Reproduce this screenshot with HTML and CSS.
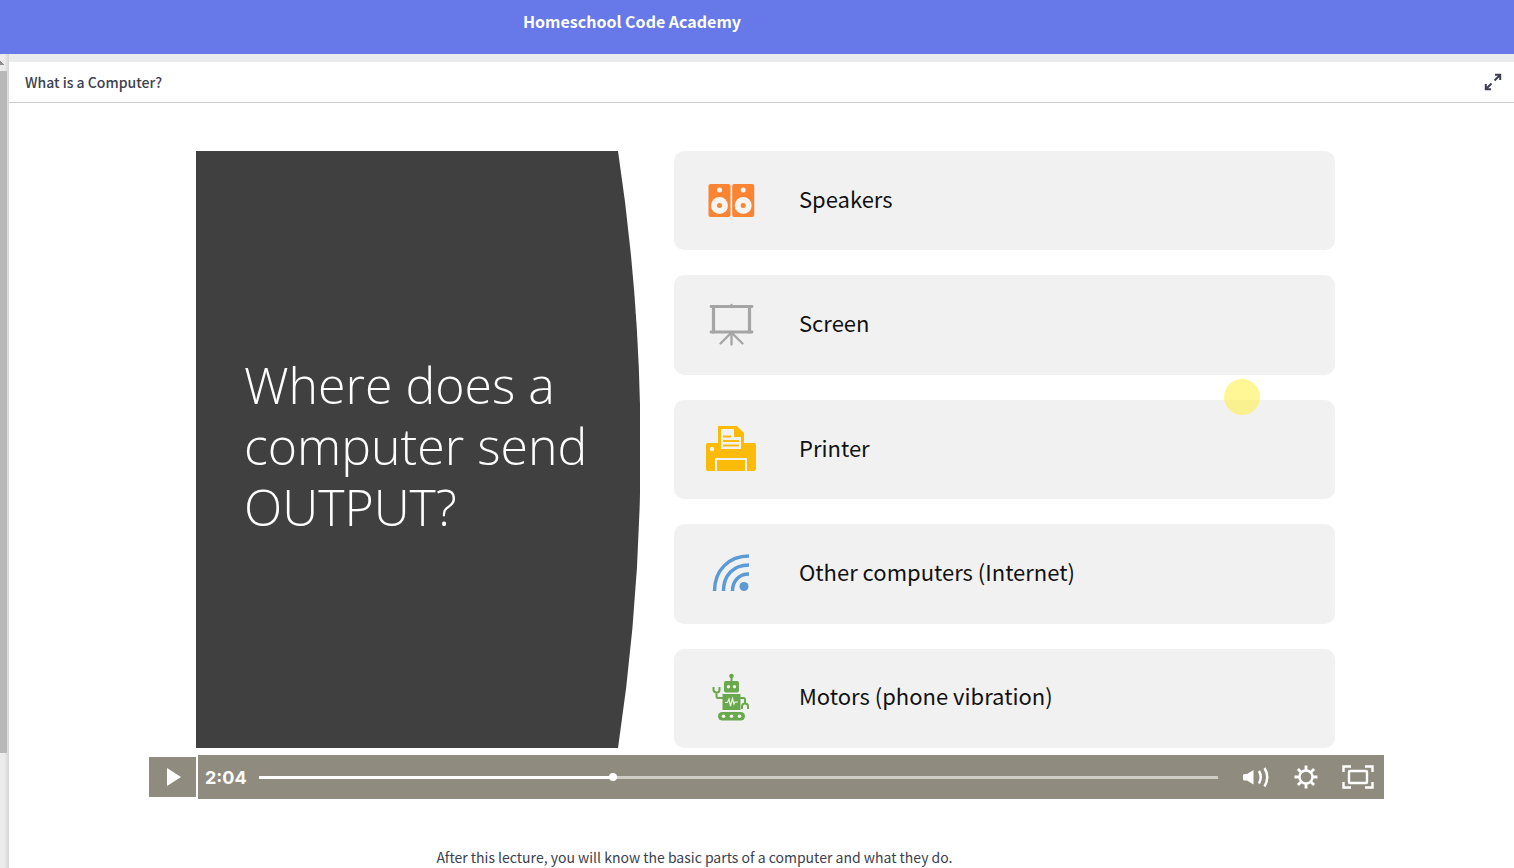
FILE: index.html
```html
<!DOCTYPE html>
<html lang="en">
<head>
    <meta charset="UTF-8">
    <meta name="viewport" content="width=device-width, initial-scale=1.0">
    <title>Homeschool Code Academy</title>
    <link rel="stylesheet" href="styles.css">
</head>
<body>

    <!-- Top Bar -->
    <header class="topbar">
        <h1 class="site-title">Homeschool Code Academy</h1>
    </header>

    <div class="layout">

        <!-- Sidebar scroll strip -->
        <div class="scroll-strip">
            <div class="scroll-arrow"></div>
            <div class="scroll-thumb"></div>
            <div class="scroll-rest"></div>
        </div>

        <main class="lesson">
            <div class="lesson-header">
                <h2 class="lesson-title">What is a Computer?</h2>
                <button class="icon-button" type="button" aria-label="Expand lesson">
                    <svg class="expand-icon" width="18" height="18" viewBox="0 0 18 18">
                        <path d="M10.5 7.5L15.5 2.5M11 1.8H16.2V7M7.5 10.5L2.5 15.5M1.8 11V16.2H7"/>
                    </svg>
                </button>
            </div>

            <!-- Video Player -->
            <section class="player">
                <div class="slide">
                    <div class="slide-heading">
                        <svg class="slide-shape" viewBox="0 0 444 597" preserveAspectRatio="none">
                            <path d="M0 0H422Q467 298 422 597H0Z"/>
                        </svg>
                        <h3 class="slide-title">Where does a<br>computer send<br>OUTPUT?</h3>
                    </div>

                    <ul class="cards">
                        <li class="card">
                            <svg class="card-icon" viewBox="0 0 50 50">
                                <rect x="2.500" y="9" width="22" height="33" rx="2" fill="#fb8432"/>
                                <rect x="26.200" y="9" width="22" height="33" rx="2" fill="#fb8432"/>
                                <g fill="#f8f4f1">
                                    <circle cx="13.500" cy="15" r="2.500"/>
                                    <circle cx="37.200" cy="15" r="2.500"/>
                                    <circle cx="13.500" cy="30.500" r="8.500"/>
                                    <circle cx="37.200" cy="30.500" r="8.500"/>
                                </g>
                                <circle cx="13.500" cy="30.500" r="2.500" fill="#fb8432"/>
                                <circle cx="37.200" cy="30.500" r="2.500" fill="#fb8432"/>
                            </svg>
                            <span class="card-label">Speakers</span>
                        </li>
                        <li class="card">
                            <svg class="card-icon" viewBox="0 0 50 50" fill="none" stroke="#a5a5a5" stroke-width="2.300" stroke-linecap="round">
                                <path d="M5 7.500H46M5 33H46" stroke-width="2.800"/>
                                <path d="M7.500 7.500V33M43.500 7.500V33" stroke-width="3.200"/>
                                <path d="M25.500 6V8M25.500 33V45.500M25 34L14.500 44.500M26 34L36.500 44.500"/>
                            </svg>
                            <span class="card-label">Screen</span>
                        </li>
                        <li class="card">
                            <svg class="card-icon" viewBox="0 0 50 50">
                                <path fill="#fdbb09" d="M12 19V2H31L38 9V19H48Q50 19 50 21V45Q50 47 48 47H41V34H9V47H2Q0 47 0 45V21Q0 19 2 19H12ZM15 5V25H35V13H28V5Z" fill-rule="evenodd"/>
                                <path fill="#fdbb09" d="M11 36H39V47H11ZM31 6V10H35Z"/>
                                <path stroke="#fdbb09" stroke-width="2" d="M17 12.500H25M17 17H33M17 21.500H33"/>
                                <circle cx="6" cy="25" r="2.200" fill="#f8f4f1"/>
                            </svg>
                            <span class="card-label">Printer</span>
                        </li>
                        <li class="card">
                            <svg class="card-icon" viewBox="0 0 50 50" fill="none" stroke="#5b9bd5" stroke-width="3.500">
                                <path d="M8.500 43C8.500 22 23 8 43 8M17.500 43C17.500 27 27.500 17 43 17M26.500 43C26.500 33 33 26 43 26"/>
                                <circle cx="38" cy="38.500" r="4.500" fill="#5b9bd5" stroke="none"/>
                            </svg>
                            <span class="card-label">Other computers (Internet)</span>
                        </li>
                        <li class="card">
                            <svg class="card-icon" viewBox="0 0 50 50" fill="#69a84c">
                                <circle cx="25.500" cy="4" r="2.300"/>
                                <rect x="24.500" y="4" width="2" height="6"/>
                                <rect x="18" y="9" width="15" height="11.500" rx="2"/>
                                <rect x="16.500" y="22" width="18" height="16"/>
                                <rect x="12" y="40" width="27" height="8.500" rx="4.200"/>
                                <path fill="none" stroke="#69a84c" stroke-width="2" d="M17 26H12Q10.500 26 10.500 24V20.500M7.500 15V18Q8 20.500 10.500 20.500Q13.500 20.500 13.500 18V15M34 26H37.500Q39 26 39 28V31M36 37V34Q36.500 31.500 39 31.500Q42 31.500 42 34V37"/>
                                <g fill="#f0f1ef">
                                    <circle cx="22.500" cy="14.800" r="1.700"/>
                                    <circle cx="28.500" cy="14.800" r="1.700"/>
                                    <circle cx="17.500" cy="44.200" r="1.800"/>
                                    <circle cx="25.500" cy="44.200" r="1.800"/>
                                    <circle cx="33.500" cy="44.200" r="1.800"/>
                                </g>
                                <path fill="none" stroke="#f0f1ef" stroke-width="1.200" d="M19 30.500H21.500L23 27L24.500 34L26.500 26.500L28 32L29 30H32"/>
                            </svg>
                            <span class="card-label">Motors (phone vibration)</span>
                        </li>
                        <li class="pointer-spot" aria-hidden="true"></li>
                    </ul>
                </div>

                <!-- Player Controls -->
                <div class="controls">
                    <button class="play-button" type="button" aria-label="Play">
                        <svg width="14" height="18" viewBox="0 0 14 18"><path d="M0 0L14 9L0 18Z" fill="#fff"/></svg>
                    </button>
                    <div class="control-bar">
                        <span class="time">2:04</span>
                        <input class="seek" type="range" min="0" max="1000" value="368" aria-label="Seek">
                        <div class="control-icons">
                            <button class="icon-button" type="button" aria-label="Volume">
                                <svg width="28" height="24" viewBox="0 0 28 24">
                                    <path fill="#fff" d="M1 10.500Q1 9 2.500 9H5L11.500 5V19.500L5 15.500H2.500Q1 15.500 1 14Z"/>
                                    <path fill="none" stroke="#fff" stroke-width="2.500" d="M17 6Q20.500 12 17 18.500M22.500 3Q28 12 22.500 21.500"/>
                                </svg>
                            </button>
                            <button class="icon-button" type="button" aria-label="Settings">
                                <svg width="24" height="24" viewBox="0 0 24 24" fill="none" stroke="#fff">
                                    <circle cx="12" cy="12" r="6.500" stroke-width="2.400"/>
                                    <path stroke-width="2.800" d="M12 .5V5M12 19V23.500M.5 12H5M19 12H23.500M3.900 3.900L7 7M17 17L20.100 20.100M3.900 20.100L7 17M17 7L20.100 3.900"/>
                                </svg>
                            </button>
                            <button class="icon-button" type="button" aria-label="Fullscreen">
                                <svg width="32" height="24" viewBox="0 0 32 24" fill="none" stroke="#fff" stroke-width="2.400">
                                    <rect x="7" y="6" width="18" height="12" rx="1"/>
                                    <path d="M1.500 7V1.500H9M23 1.500H30.500V7M30.500 17V22.500H23M9 22.500H1.500V17"/>
                                </svg>
                            </button>
                        </div>
                    </div>
                </div>
            </section>

            <p class="lesson-text">After this lecture, you will know the basic parts of a computer and what they do.</p>
        </main>
    </div>

</body>
</html>
```
FILE: styles.css
```css
body, html {
    margin: 0;
    padding: 0;
}

body {
    min-height: 100vh;
    display: flex;
    flex-direction: column;
    background-color: #e9ebed;
    color: #3c414f;
    font-family: 'Noto Sans CJK SC', 'Open Sans', sans-serif;
}

h1, h2, h3, p, ul {
    margin: 0;
    padding: 0;
}

button {
    border: none;
    padding: 0;
    background: none;
    cursor: pointer;
}

svg {
    display: block;
}

/* Top Bar */
.topbar {
    height: 42px;
    padding: 0 250px 12px 0;
    display: flex;
    justify-content: center;
    align-items: center;
    background-color: #6779e8;
}

.site-title {
    color: #fff;
    font-size: 16px;
    line-height: 24px;
    font-weight: 700;
}

.layout {
    flex: 1;
    display: flex;
}

/* Sidebar scroll strip */
.scroll-strip {
    width: 9px;
    display: flex;
    flex-direction: column;
    background: linear-gradient(to right, #ececec 4px, #d6d6d6);
}

.scroll-arrow {
    height: 17px;
    background: linear-gradient(to top right, #8f8f8f 50%, transparent 50%) 0 7px / 4px 4px no-repeat;
}

.scroll-thumb {
    flex: 682;
    width: 7px;
    background-color: #b8b8b8;
}

.scroll-rest {
    flex: 115;
}

/* Lesson */
.lesson {
    flex: 1;
    margin-top: 8px;
    background-color: #fff;
}

.lesson-header {
    display: flex;
    justify-content: space-between;
    align-items: center;
    height: 40px;
    padding: 0 12px 0 16px;
    border-bottom: 1px solid #ccc;
}

.lesson-title {
    font-size: 14px;
    line-height: 20px;
    font-weight: 500;
}

.expand-icon {
    fill: none;
    stroke: #3c414f;
    stroke-width: 2;
}

/* Player */
.player {
    padding: 48px 130px 0 140px;
}

.slide {
    display: flex;
    gap: 34px;
    padding: 0 49px 0 47px;
}

.slide-heading {
    position: relative;
    flex: 444;
    display: flex;
    align-items: center;
}

.slide-shape {
    position: absolute;
    top: 0;
    left: 0;
    width: 100%;
    height: 100%;
    fill: #404040;
}

.slide-title {
    position: relative;
    padding: 0 0 6px 48px;
    color: #fff;
    font-family: 'Open Sans', sans-serif;
    font-size: 50px;
    line-height: 61px;
    font-weight: 300;
    white-space: nowrap;
}

.cards {
    position: relative;
    flex: 661;
    min-height: 597px;
    display: flex;
    flex-direction: column;
    gap: 25px;
    list-style: none;
}

.card {
    flex: 1;
    display: flex;
    align-items: center;
    gap: 43px;
    padding: 0 0 2px 32px;
    border-radius: 10px;
    background-color: #f1f1f1;
    color: #111;
    font-size: 22px;
    line-height: 30px;
}

.card-icon {
    width: 50px;
    height: 50px;
}

.card-label {
    padding-bottom: 4px;
}

.pointer-spot {
    position: absolute;
    top: 228px;
    right: 75px;
    width: 36px;
    height: 36px;
    border-radius: 50%;
    background-color: rgba(255, 242, 80, 0.6);
}

/* Controls */
.controls {
    display: flex;
    align-items: center;
    gap: 2px;
    margin-top: 7px;
}

.play-button {
    width: 47px;
    height: 40px;
    padding-left: 2px;
    display: flex;
    justify-content: center;
    align-items: center;
    background-color: #8f8c7f;
}

.control-bar {
    flex: 1;
    display: flex;
    align-items: center;
    height: 44px;
    padding: 0 10px 0 7px;
    background-color: #8f8c7f;
}

.time {
    width: 54px;
    color: #fff;
    font-family: Inter, sans-serif;
    font-size: 18px;
    font-weight: 700;
}

.seek {
    flex: 1;
    height: 8px;
    margin: 0;
    appearance: none;
    background: linear-gradient(to right, #fff 37%, #cfcdc5 37%) center / 100% 3px no-repeat;
}

.seek::-webkit-slider-thumb {
    appearance: none;
    width: 8px;
    height: 8px;
    border-radius: 50%;
    background-color: #fff;
}

.control-icons {
    display: flex;
    gap: 24px;
    margin-left: 24px;
}

.lesson-text {
    padding: 48px 134px 0 0;
    font-size: 14px;
    line-height: 20px;
    text-align: center;
}
```
